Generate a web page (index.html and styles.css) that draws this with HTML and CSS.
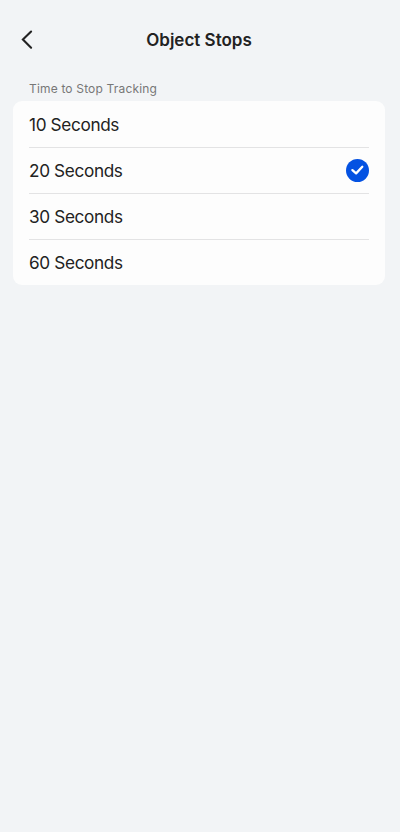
FILE: index.html
```html
<!DOCTYPE html>
<html lang="en">
<head>
<meta charset="utf-8">
<title>Object Stops</title>
<link rel="stylesheet" href="styles.css">
</head>
<body>
<header class="nav">
  <svg class="back" width="24" height="24" viewBox="0 0 24 24"><path d="M16.1 3.5 7.9 11.6l8.2 8.1"/></svg>
  <h1 class="title">Object Stops</h1>
</header>
<main class="content">
  <h2 class="label">Time to Stop Tracking</h2>
  <ul class="card">
    <li class="row"><span class="name">10 Seconds</span></li>
    <li class="row"><span class="name">20 Seconds</span><svg class="check" width="23" height="23" viewBox="0 0 23 23"><circle cx="11.5" cy="11.5" r="11.5"/><path d="m6.4 11.1 3.7 3.3 6.2-6.6"/></svg></li>
    <li class="row"><span class="name">30 Seconds</span></li>
    <li class="row"><span class="name">60 Seconds</span></li>
  </ul>
</main>
</body>
</html>
```
FILE: styles.css
```css
* { box-sizing: border-box; margin: 0; padding: 0; }
body { min-height: 832px; background: #f2f4f6; color: #222; font-family: Inter, sans-serif; }
.nav { display: grid; grid-template-columns: 24px 1fr 26px; align-items: center; height: 79px; padding: 0 15px; }
.back { fill: none; stroke: #222; stroke-width: 2.1; stroke-linecap: round; }
.title { font-size: 17px; font-weight: 600; line-height: 24px; text-align: center; }
.content { padding: 0 15.5px 0 13px; }
.label { height: 22px; padding-left: 16px; color: #777; font-size: 12px; font-weight: 400; line-height: 19px; letter-spacing: 0.17px; }
.card { height: 184px; padding: 0 15.5px 0 16px; border-radius: 9px; background: #fdfdfd; list-style: none; }
.row { display: flex; align-items: center; justify-content: space-between; height: 46px; border-top: 1px solid #e3e3e4; }
.row:first-child { border-top-color: transparent; }
.name { font-size: 17.2px; line-height: 24px; letter-spacing: -0.35px; }
.check { margin-top: -1px; }
.check circle { fill: #0452e2; }
.check path { fill: none; stroke: #fff; stroke-width: 2.3; stroke-linecap: round; stroke-linejoin: round; }
```
